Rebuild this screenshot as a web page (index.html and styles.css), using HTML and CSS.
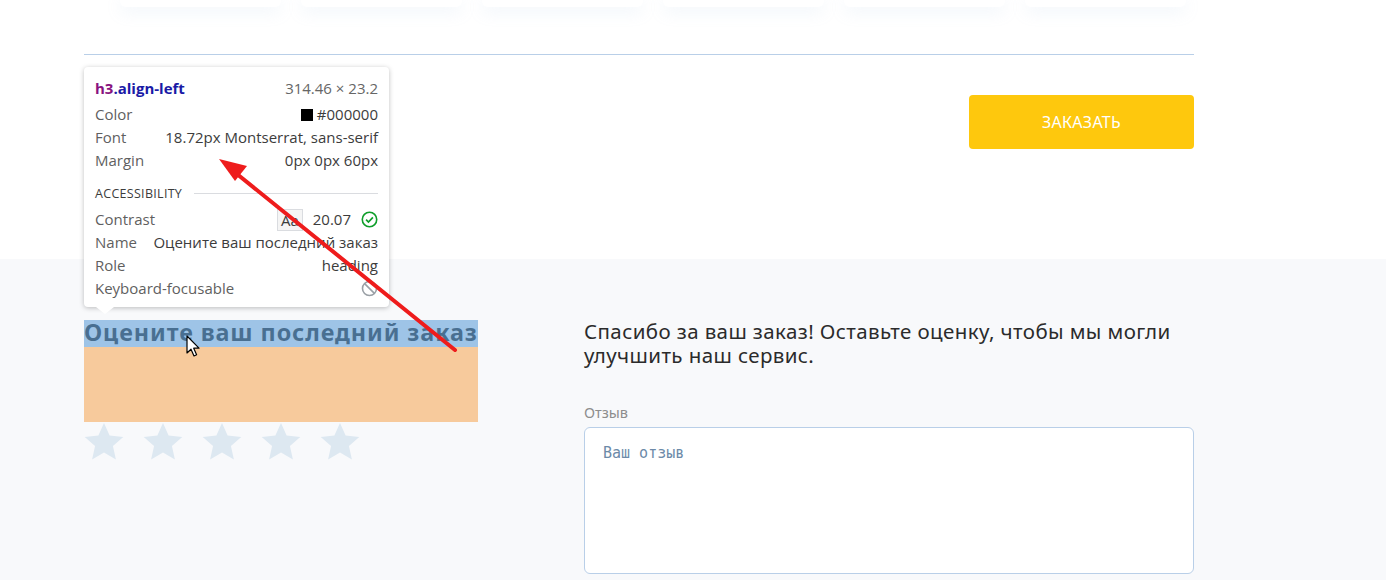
FILE: index.html
```html
<!DOCTYPE html>
<html lang="ru">
<head>
<meta charset="utf-8">
<title>Оцените ваш последний заказ</title>
<link rel="stylesheet" href="styles.css">
</head>
<body>
<section class="top">
  <div class="container">
    <div class="cards">
      <div class="card"></div><div class="card"></div><div class="card"></div>
      <div class="card"></div><div class="card"></div><div class="card"></div>
    </div>
    <div class="divider"></div>
    <div class="actions">
      <button class="btn-order">ЗАКАЗАТЬ</button>
    </div>
  </div>
</section>
<section class="rate">
  <div class="container rate-grid">
    <div class="rate-left">
      <h3 class="align-left">Оцените ваш последний заказ</h3>
      <div class="stars">
        <svg class="star" viewBox="0 0 24 24"><path d="M12 1.2l3.2 7.1 7.8.8-5.9 5.2 1.7 7.7L12 18l-6.8 4 1.7-7.7-5.9-5.2 7.8-.8z"/></svg>
        <svg class="star" viewBox="0 0 24 24"><path d="M12 1.2l3.2 7.1 7.8.8-5.9 5.2 1.7 7.7L12 18l-6.8 4 1.7-7.7-5.9-5.2 7.8-.8z"/></svg>
        <svg class="star" viewBox="0 0 24 24"><path d="M12 1.2l3.2 7.1 7.8.8-5.9 5.2 1.7 7.7L12 18l-6.8 4 1.7-7.7-5.9-5.2 7.8-.8z"/></svg>
        <svg class="star" viewBox="0 0 24 24"><path d="M12 1.2l3.2 7.1 7.8.8-5.9 5.2 1.7 7.7L12 18l-6.8 4 1.7-7.7-5.9-5.2 7.8-.8z"/></svg>
        <svg class="star" viewBox="0 0 24 24"><path d="M12 1.2l3.2 7.1 7.8.8-5.9 5.2 1.7 7.7L12 18l-6.8 4 1.7-7.7-5.9-5.2 7.8-.8z"/></svg>
      </div>
    </div>
    <div class="rate-right">
      <p class="thanks">Спасибо за ваш заказ! Оставьте оценку, чтобы мы могли улучшить наш сервис.</p>
      <label class="field-label" for="review">Отзыв</label>
      <textarea id="review" class="review" placeholder="Ваш отзыв"></textarea>
    </div>
  </div>
</section>

<div class="hl-content"></div>
<div class="hl-margin"></div>

<div class="tooltip">
  <div class="tt-head">
    <span class="tt-sel"><span class="tt-tag">h3</span>.align-left</span>
    <span class="tt-size">314.46 × 23.2</span>
  </div>
  <div class="tt-row"><span class="tt-key">Color</span><span class="tt-val"><i class="swatch"></i>#000000</span></div>
  <div class="tt-row"><span class="tt-key">Font</span><span class="tt-val">18.72px Montserrat, sans-serif</span></div>
  <div class="tt-row"><span class="tt-key">Margin</span><span class="tt-val">0px 0px 60px</span></div>
  <div class="tt-section"><span>ACCESSIBILITY</span><i class="tt-line"></i></div>
  <div class="tt-row"><span class="tt-key">Contrast</span><span class="tt-val"><span class="aa">Aa</span>20.07
    <svg class="ico" viewBox="0 0 16 16"><circle cx="8" cy="8" r="6.8" fill="none" stroke="#0e9e2a" stroke-width="1.5"/><path d="M4.8 8.2l2.2 2.2 4.2-4.4" fill="none" stroke="#0e9e2a" stroke-width="1.6"/></svg></span></div>
  <div class="tt-row"><span class="tt-key">Name</span><span class="tt-val">Оцените ваш последний заказ</span></div>
  <div class="tt-row"><span class="tt-key">Role</span><span class="tt-val">heading</span></div>
  <div class="tt-row"><span class="tt-key">Keyboard-focusable</span><span class="tt-val">
    <svg class="ico" viewBox="0 0 16 16"><circle cx="8" cy="8" r="6.6" fill="none" stroke="#9aa0a6" stroke-width="1.5"/><path d="M3.4 3.4l9.2 9.2" stroke="#9aa0a6" stroke-width="1.5"/></svg></span></div>
  <i class="tt-pointer"></i>
</div>

<svg class="arrow" width="1386" height="580" viewBox="0 0 1386 580">
  <line x1="455" y1="350" x2="232" y2="170" stroke="#ee1c1c" stroke-width="4" stroke-linecap="round"/>
  <path d="M219 159 L247 166 L235 181 Z" fill="#ee1c1c"/>
</svg>

<svg class="cursor" width="16" height="24" viewBox="0 0 16 24">
  <path d="M1 1 L1 18 L5 14.2 L8 21 L10.6 19.8 L7.7 13.2 L13 13.2 Z" fill="#fff" stroke="#000" stroke-width="1.2" stroke-linejoin="round"/>
</svg>
</body>
</html>
```
FILE: styles.css
```css
* { box-sizing: border-box; }
html, body { margin: 0; padding: 0; }
body {
  width: 1386px;
  height: 580px;
  overflow: hidden;
  background: #f8f9fb;
  font-family: "Noto Sans", "Open Sans", sans-serif;
  position: relative;
}
.container {
  width: 1110px;
  margin-left: 84px;
}
.top {
  background: #fff;
  height: 259px;
}
.cards {
  display: flex;
  gap: 20px;
  padding-left: 36px;
}
.card {
  width: 161px;
  height: 7px;
  background: #fff;
  border-radius: 0 0 6px 6px;
  box-shadow: 0 4px 16px rgba(160, 190, 225, 0.22);
}
.divider {
  margin-top: 47px;
  height: 1px;
  background: #b9cfe8;
}
.actions {
  display: flex;
  justify-content: flex-end;
  padding-top: 40px;
}
.btn-order {
  width: 225px;
  height: 54px;
  border: 0;
  border-radius: 4px;
  background: #fec80d;
  color: #fff;
  font-family: "Noto Sans", sans-serif;
  font-size: 16px;
  letter-spacing: 0.3px;
}
.rate-grid {
  display: grid;
  grid-template-columns: 500px 610px;
  padding-top: 60px;
}
.align-left {
  margin: 0 0 75px;
  font-family: "Noto Sans", sans-serif;
  font-weight: 700;
  font-size: 23.4px;
  line-height: 27px;
  height: 27px;
  letter-spacing: 0.9px;
  color: #000;
  white-space: nowrap;
}
.stars {
  display: flex;
  gap: 17px;
  margin-top: 1px;
  margin-left: -1px;
}
.star {
  width: 42px;
  height: 42px;
  fill: #dde8f1;
}
.thanks {
  margin: 0;
  font-family: "Noto Sans", sans-serif;
  font-size: 20.5px;
  line-height: 24px;
  letter-spacing: 0.4px;
  color: #2b2b2b;
  width: 610px;
}
.field-label {
  display: block;
  margin-top: 35px;
  font-size: 14.5px;
  line-height: 20px;
  color: #8d8d8d;
}
.review {
  display: block;
  margin-top: 5px;
  width: 610px;
  height: 147px;
  border: 1px solid #b9cfe8;
  border-radius: 6px;
  background: #fff;
  padding: 16px 18px;
  resize: none;
  font-family: "DejaVu Sans Mono", monospace;
  font-size: 15px;
}
.review::placeholder { color: #6c8aa8; }

/* devtools highlight overlay */
.hl-content {
  position: absolute;
  left: 84px; top: 320px;
  width: 394px; height: 27px;
  background: rgba(111, 168, 220, 0.66);
}
.hl-margin {
  position: absolute;
  left: 84px; top: 347px;
  width: 394px; height: 75px;
  background: rgba(246, 178, 107, 0.66);
}
.tooltip {
  position: absolute;
  left: 84px; top: 67px;
  width: 305px; height: 240px;
  background: #fff;
  border-radius: 4px;
  box-shadow: 0 1px 5px rgba(0,0,0,0.25);
  padding: 10px 11px 0;
  font-family: "Open Sans", "Noto Sans", sans-serif;
  font-size: 15px;
  color: #3c3c3c;
}
.tt-head {
  display: flex;
  justify-content: space-between;
  height: 22px;
  line-height: 22px;
  margin-bottom: 4px;
}
.tt-sel { color: #1a1aa6; font-weight: 700; font-size: 15px; }
.tt-tag { color: #881280; }
.tt-size { color: #666; }
.tt-row {
  display: flex;
  justify-content: space-between;
  align-items: center;
  height: 23px;
  line-height: 23px;
  white-space: nowrap;
}
.tt-key { color: #5f5f5f; }
.tt-val { display: flex; align-items: center; gap: 4px; color: #3c3c3c; }
.swatch {
  display: inline-block;
  width: 12px; height: 12px;
  background: #000;
  margin-right: 0;
}
.tt-section {
  display: flex;
  align-items: center;
  gap: 12px;
  height: 22px;
  margin-top: 10px;
  margin-bottom: 4px;
  font-size: 12.5px;
  letter-spacing: 0.3px;
  color: #3c3c3c;
}
.tt-line { flex: 1; height: 1px; background: #dadce0; }
.aa {
  display: inline-block;
  border: 1px solid #dadce0;
  background: #f5f5f5;
  padding: 0 3px;
  line-height: 20px;
  margin-right: 6px;
}
.ico { width: 17px; height: 17px; margin-left: 6px; }
.tt-pointer {
  position: absolute;
  left: 12px; bottom: -7px;
  width: 0; height: 0;
  border-left: 9px solid transparent;
  border-right: 9px solid transparent;
  border-top: 7px solid #fff;
}
.arrow {
  position: absolute;
  left: 0; top: 0;
  pointer-events: none;
}
.cursor {
  position: absolute;
  left: 186px; top: 335px;
}
```
